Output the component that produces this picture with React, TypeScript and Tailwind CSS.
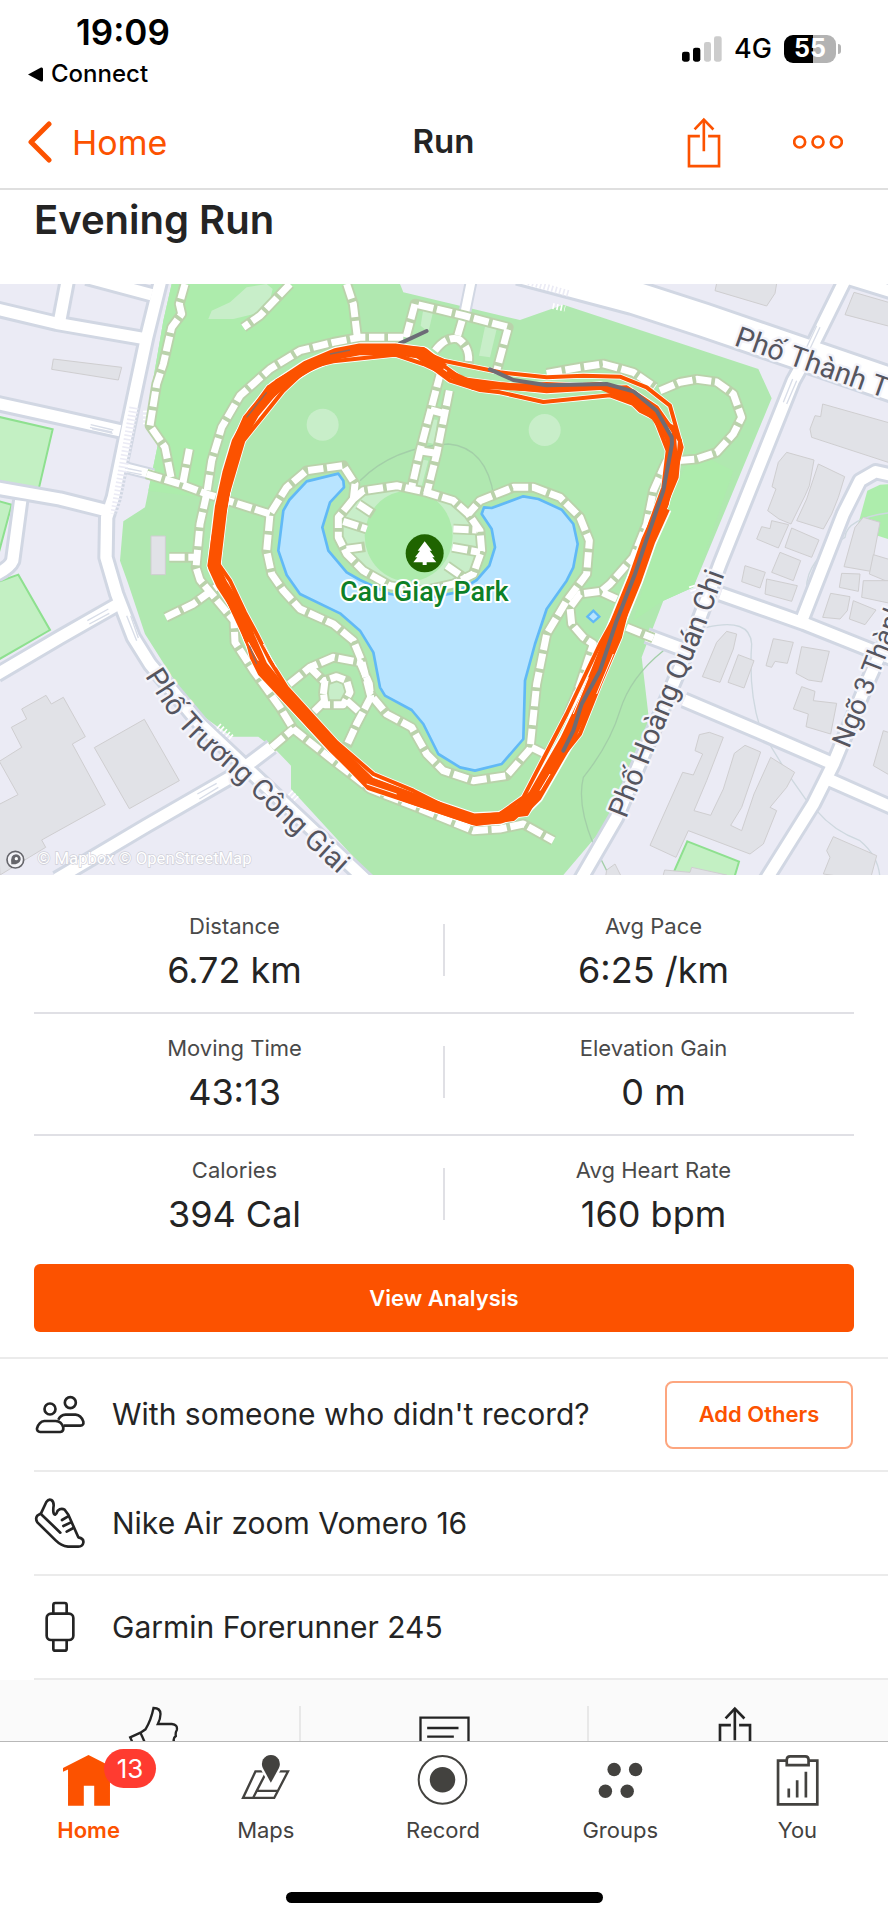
import React from 'react'
import clsx from 'clsx'

const INTER = "font-['Inter',sans-serif]"

const stats = [
  [
    { label: 'Distance', value: '6.72 km' },
    { label: 'Avg Pace', value: '6:25 /km' }
  ],
  [
    { label: 'Moving Time', value: '43:13' },
    { label: 'Elevation Gain', value: '0 m' }
  ],
  [
    { label: 'Calories', value: '394 Cal' },
    { label: 'Avg Heart Rate', value: '160 bpm' }
  ]
]

// Footpaths of the park, drawn as a casing with white dashes on top
const footpaths = [
  'M555 0L538 60L545 90L515 130L490 240L470 300L450 425L495 490L515 590',
  'M568 495L548 600',
  'M440 570L540 600L620 630L700 655L810 690',
  'M1210 160L1080 160L1000 175L900 200L810 255L720 335L665 430L635 530L620 630L600 720L588 850L600 888L660 960L702 1010L705 1075L760 1160L840 1270L880 1335L1000 1430L1110 1515L1250 1570L1420 1640L1500 1635L1570 1620L1660 1670',
  'M870 0L780 95L730 130',
  'M1040 0L1060 60L1072 160',
  'M1218 160L1245 60L1392 95L1525 130L1490 260',
  'M1386 110L1370 165',
  'M1305 200Q1340 155 1375 165Q1412 190 1405 240',
  'M1322 265L1260 500L1235 610',
  'M1348 320L1310 510L1280 630',
  'M1292 378L1330 388',
  'M1258 500L1310 508',
  'M1060 645L1065 600L1030 545L920 560L860 610L810 690L800 800L815 870L850 920L900 975L1000 1020L1060 1070L1085 1130L1110 1230L1160 1290L1235 1330L1280 1410L1330 1460L1420 1490L1520 1475L1590 1395L1610 1200L1640 1050L1700 950L1760 870L1768 770L1740 700L1680 640L1600 610L1540 610L1440 650L1405 690',
  'M1060 645L1015 700L1015 760L1040 810L1090 860L1170 905L1270 920L1360 900L1420 870L1445 800L1440 740L1405 690L1360 650L1280 625L1190 605L1090 620L1060 645',
  'M1075 660L1120 690',
  'M1030 712L1100 735',
  'M1040 796L1095 788',
  'M1360 735L1430 738',
  'M1357 790L1440 805',
  'M1340 845L1390 880',
  'M1980 320L2040 295L2090 286L2150 294L2200 330L2225 400L2200 450L2150 505L2090 525L2030 530',
  'M1640 268L1740 250L1810 240L1900 265L1965 310',
  'M2000 530L1960 620L1940 720L1900 820L1830 900L1800 925',
  'M1850 945L1800 922L1740 930L1710 970L1715 1020L1750 1060L1780 1080L1760 1140L1730 1230L1700 1300',
  'M1595 1390L1645 1415',
  'M1880 1030L1960 1062',
  'M497 1000L580 960L655 905',
  'M508 820L590 820',
  'M868 1200L930 1150L1000 1120L1080 1135L1108 1200L1112 1240L1070 1320L1040 1385',
  'M925 1145L970 1190',
  'M970 1230L975 1190L1010 1178L1040 1190L1050 1225L1030 1262L975 1262L970 1225',
  'M975 1250L935 1290',
  'M1040 1250L1080 1285',
  'M815 1390L880 1335'
]

const roads = [
  'M482 -10L440 160L385 420L340 640L320 700L318 820L350 930L400 1060L450 1140L600 1320L1110 1800',
  'M-10 75L170 118L440 165',
  'M202 -10L178 115',
  'M260 -20L455 32',
  'M-10 358L180 400L360 440',
  'M-10 612L180 645L320 680',
  'M62 650L38 830Q30 850 -10 870',
  'M-10 1172L180 1060L350 963',
  'M170 1785L440 1625L700 1475L815 1388',
  'M2535 -12L2430 200L2380 290L2160 840L2062 1100L1850 1600L1740 1790',
  'M2535 -20L2680 25',
  'M2680 575L2627 563L2580 590L2530 690L2405 1010',
  'M2162 930L2412 1018L2680 1125',
  'M2052 1248L2280 1345L2500 1440',
  'M2740 890L2600 1200L2500 1440L2440 1560L2290 1800',
  'M2490 1488L2680 1572',
  'M1940 1055L2060 1100'
]

const buildings = [
  'M160 225L365 250L355 288L155 256Z',
  'M453 756L496 756L496 872L453 872Z',
  'M65 1275L138 1234L154 1260L190 1240L256 1358L217 1380L316 1562L125 1668L137 1690L0 1773L-10 1565L54 1532L-2 1432L65 1390L34 1330L80 1305Z',
  'M283 1391L433 1306L538 1490L388 1574Z',
  'M2150 -2L2330 -2L2325 28L2300 66L2145 20Z',
  'M2562 25L2700 65L2680 130L2535 92Z',
  'M2468 360L2680 420L2680 540L2435 460L2430 435L2445 395L2462 398Z',
  'M2360 505L2442 528L2428 605L2415 635L2373 720L2337 705L2303 680L2328 615L2316 608L2335 535Z',
  'M2455 540L2534 578L2515 640L2495 690L2470 735L2390 710L2420 645Z',
  'M2315 710L2366 722L2335 792L2270 765L2285 728L2310 734Z',
  'M2375 732L2457 768L2435 820L2355 790Z',
  'M2340 805L2402 830L2380 890L2315 865Z',
  'M2235 845L2296 865L2280 912L2225 893Z',
  'M2590 700L2640 715L2612 862L2532 848L2565 730Z',
  'M2620 812L2680 830L2680 900L2608 870Z',
  'M2300 885L2392 905L2375 952L2295 930Z',
  'M2180 1042L2210 1050L2200 1095L2160 1195L2107 1178L2150 1075Z',
  'M2215 1112L2262 1130L2232 1212L2184 1195Z',
  'M2320 1064L2380 1075L2362 1138L2325 1132L2315 1150L2298 1145Z',
  'M2405 1088L2488 1102L2465 1194L2425 1188L2388 1168Z',
  'M2492 928L2550 938L2542 980L2520 1005L2468 1000Z',
  'M2560 950L2628 978L2595 1022L2548 1005Z',
  'M2525 868L2580 870L2575 922L2518 910Z',
  'M2590 890L2680 890L2680 960L2585 940Z',
  'M2405 1208L2445 1222L2440 1250L2510 1258L2492 1350L2418 1328L2425 1290L2380 1275Z',
  'M2128 1345L2170 1360L2120 1490L2082 1580L2132 1594L2170 1515L2203 1408L2235 1384L2282 1404L2225 1570L2192 1624L2225 1640L2262 1530L2312 1420L2384 1465L2360 1510L2310 1570L2330 1580L2290 1680L2250 1710L2065 1640L2028 1720L1950 1684L2048 1465L2080 1473L2108 1410L2085 1400L2098 1352Z',
  'M1994 1758L2070 1765L2075 1750L2180 1773L1985 1790Z',
  'M1845 1740L1870 1790L1815 1790L1820 1758Z',
  'M2500 1658L2630 1715L2610 1790L2470 1770L2490 1720L2480 1700Z',
  'M2650 1340L2680 1350L2680 1480L2620 1445Z'
]

const laps = [
  'M1185 190L1080 188L1010 200L920 240L830 292L735 400L700 480L668 620L640 760L628 845L660 905L715 990L752 1060L770 1110L850 1225L1000 1385L1110 1485L1230 1530L1410 1600L1500 1590L1570 1540L1700 1290L1800 1080L1850 990L1910 850L1950 720L1990 610L2003 500L1960 390L1900 330L1800 300L1640 315L1500 300L1385 285L1330 245L1270 195L1185 190',
  'M1185 212L1000 232L925 250L850 320L790 395L730 470L680 640L660 760L655 840L690 890L735 985L770 1050L810 1130L860 1210L1010 1375L1120 1470L1240 1520L1420 1610L1520 1600L1590 1570L1720 1350L1800 1180L1860 990L1930 850L1980 700L2030 580L2040 470L1970 370L1880 310L1800 312L1640 322L1480 305L1380 290L1270 240Z',
  'M1190 200L1060 195L940 235L805 310L740 400L690 540L665 660L645 780L635 850L690 960L740 1060L755 1120L780 1170L930 1330L1105 1512L1340 1590L1430 1620L1540 1605L1600 1550L1660 1450L1740 1350L1800 1200L1860 1060L1900 900L1960 760L2000 660L2045 490L2010 365L1940 310L1860 278L1750 275L1640 280L1500 265L1330 230L1260 200Z',
  'M1180 205L1070 205L985 225L870 290L790 360L720 470L690 590L670 700L650 830L640 870L700 960L740 1070L800 1160L940 1310L1110 1490L1250 1545L1420 1612L1560 1590L1670 1430L1760 1260L1830 1090L1870 960L1900 880L1940 760L2030 560L2020 430L1920 380L1900 360L1830 334L1630 354L1500 325L1440 318L1350 290L1250 215Z',
  'M1180 195L1100 192L1000 210L900 262L810 330L750 420L700 530L675 680L655 850L685 950L745 1080L830 1210L990 1370L1120 1500L1400 1600L1500 1600L1580 1590L1700 1380L1780 1210L1860 1010L1920 850L2000 660L2015 520L1990 420L1930 350L1830 308L1640 300L1420 312L1340 270L1240 198Z'
]

// Where the laps run close together they merge into one broad band
const westBand =
  'M1330 255L1270 208L1185 196L1080 196L1010 209L920 247L825 310L760 388L712 475L685 565L662 670L650 770L642 850L665 900L720 985L748 1060L785 1145L850 1225L1000 1390L1110 1497L1250 1548L1420 1606L1500 1602L1580 1568'
const eastBand = 'M1560 1580L1605 1535L1700 1370L1760 1245L1795 1160L1850 1020L1905 885L1945 770L1990 670'

function RouteMap() {
  const label = { fontFamily: 'Roboto', fontWeight: 400, fill: '#55555f' }
  return (
    <svg
      viewBox="0 0 2664 1773"
      className="block w-full"
      role="img"
      aria-label="Route around Cau Giay Park"
    >
      <defs>
        <path id="truong" d="M434 1176L498 1276Q560 1360 640 1425Q740 1510 860 1628L1045 1798" />
        <path id="hoang" d="M1878 1606L1957 1412L2062 1160L2107 1053L2200 800" />
        <path id="ngo" d="M2547 1396L2587 1298L2632 1185L2740 910" />
        <path id="thanh" d="M2200 183L2760 380" />
      </defs>
      <rect width="2664" height="1773" fill="#ebebf5" />

      <g fill="#c3f0c3" stroke="#8ee08f" strokeWidth="6">
        <path d="M-10 397L158 436L115 620L-10 590Z" />
        <path d="M-10 650L35 662L-10 830Z" />
        <path d="M-10 895L55 872L150 1038L-10 1130Z" />
        <path d="M2062 1672L2217 1733L2200 1790L2010 1790Z" />
      </g>
      <path d="M2680 600L2640 602L2602 620L2572 730L2600 745L2680 770Z" fill="#adedac" />

      <path
        d="M515 0L490 110L440 400L435 425L475 475L435 670L370 712L360 830L385 900L435 1050L530 1200L600 1290L695 1358L775 1358L830 1400L873 1445L873 1515L1110 1773L1690 1773L1820 1620L1930 1440L1945 1290L1925 1120L1990 950L2080 910L2315 343L2275 255L1690 62L1560 108L1210 25L1200 0Z"
        fill="#b0e8b0"
      />
      <path
        d="M515 0L490 110L440 400L475 475L445 620L600 640L665 430L800 260L1000 170L1080 160L1050 0Z"
        fill="#adecac"
      />
      <path d="M2080 500L2200 560L2080 910L1990 950L1900 1010L2000 660Z" fill="#adecac" />
      <g fill="#c8eec9">
        <path d="M625 105L635 80L690 55L740 10L800 0L818 15L812 40L770 88L700 105Z" />
        <circle cx="968" cy="422" r="48" />
        <circle cx="1634" cy="438" r="48" />
        <path d="M1270 75L1300 80L1285 145L1262 125Z" />
        <path d="M1455 128L1490 135L1470 220L1437 215Z" />
        <path d="M1292 405L1312 408L1302 480L1280 475Z" />
        <path d="M1260 525L1285 530L1265 605L1245 600Z" />
        <path d="M1060 650L1120 615L1220 620L1360 650L1450 730L1445 820L1400 880L1270 920L1150 895L1050 820L1010 740Z" />
        <circle cx="1006" cy="1222" r="32" stroke="#b9cfa8" strokeWidth="5" />
      </g>
      <ellipse cx="1226" cy="756" rx="132" ry="136" fill="#adebac" />

      <path
        d="M1015 569L920 592L868 648L850 680L835 800L860 873L900 930L1020 988L1080 1040L1120 1105L1140 1210L1155 1235L1235 1278L1270 1320L1315 1410L1380 1450L1425 1460L1505 1440L1570 1365L1575 1190L1605 1080L1640 975L1700 890L1720 850L1733 780L1720 720L1685 677L1615 645L1570 637L1475 672L1452 670L1445 690L1475 735L1485 790L1468 845L1430 888L1370 925L1270 945L1170 930L1080 888L1040 865L985 800L967 730L990 655L1032 610L1030 590Z"
        fill="#b8e4ff"
        stroke="#61b9f6"
        strokeWidth="8"
        strokeLinejoin="round"
      />
      <path d="M1780 980L1798 998L1780 1014L1762 998Z" fill="#b8e4ff" stroke="#61b9f6" strokeWidth="7" />

      <g fill="none" stroke="#a3cfa8" strokeWidth="4">
        <path d="M1080 590Q1180 490 1345 480Q1460 490 1482 640" />
        <path d="M1990 1100Q1890 1180 1860 1280Q1830 1380 1750 1480Q1730 1560 1780 1680L1820 1760" />
        <path d="M2120 1030Q2250 1000 2255 1080Q2245 1220 2280 1330Q2340 1440 2420 1550" stroke="#ced8df" />
        <path d="M2450 1580Q2500 1640 2580 1670Q2640 1720 2640 1790" stroke="#ced8df" />
        <path d="M2680 685Q2540 700 2535 760Q2410 830 2420 930" stroke="#ced8df" />
      </g>

      <g fill="#e1e2e7" stroke="#cfced0" strokeWidth="3">
        {buildings.map((d) => (
          <path key={d} d={d} />
        ))}
      </g>

      <g fill="none" strokeLinejoin="round">
        {roads.map((d) => (
          <path key={d} d={d} stroke="#d1d7e3" strokeWidth="52" />
        ))}
        <path d="M1560 -50L1900 40L2110 108L2700 310" stroke="#d1d7e3" strokeWidth="112" />
        <path d="M365 548L460 572M1414 -10L1394 88" stroke="#d1d7e3" strokeWidth="38" />
        {roads.map((d) => (
          <path key={d} d={d} stroke="#fff" strokeWidth="34" />
        ))}
        <path d="M1560 -50L1900 40L2110 108L2700 310" stroke="#fff" strokeWidth="94" />
        <path d="M365 548L460 572M1414 -10L1394 88" stroke="#fff" strokeWidth="26" />
        <g stroke="#d8dde8" strokeWidth="4">
          <path d="M272 422L340 438M276 434L338 448M270 430L336 444" />
          <path d="M375 552L425 562M375 562L425 572" />
          <path d="M380 995L410 1070M392 995L415 1062" />
          <path d="M262 1010L325 975M268 1020L328 988" />
          <path d="M592 1530L650 1498M598 1545L655 1510" />
          <path d="M2450 125L2415 200M2460 130L2425 205" />
          <path d="M2378 285L2350 355M2390 290L2360 360" />
        </g>
        <path d="M402 370L345 690" stroke="#ebebf5" strokeWidth="28" strokeDasharray="5 7" />
        <path d="M1585 -6L1710 30" stroke="#ebebf5" strokeWidth="20" strokeDasharray="5 7" />
        <path
          d="M438 380L438 425M1658 66L1695 74M655 1325L700 1365M870 1525L890 1545M2075 905L2085 935"
          stroke="#fff"
          strokeWidth="18"
          strokeDasharray="5 7"
        />
      </g>

      <g fill="none" strokeLinejoin="round">
        {footpaths.map((d) => (
          <path key={d} d={d} stroke="#bad2ab" strokeWidth="32" />
        ))}
        {footpaths.map((d) => (
          <path key={d} d={d} stroke="#fff" strokeWidth="21" strokeDasharray="46 11" />
        ))}
      </g>

      <path d="M1200 178L1280 141" stroke="#6c6c76" strokeWidth="12" strokeLinecap="round" />
      <g fill="none" strokeLinejoin="round">
        <path d={westBand} stroke="#fff" strokeWidth="42" />
        <path d={eastBand} stroke="#fff" strokeWidth="52" />
        {laps.map((d) => (
          <path key={d} d={d} stroke="#fff" strokeWidth="17" />
        ))}
        {laps.map((d) => (
          <path key={d} d={d} stroke="#fc5200" strokeWidth="12" />
        ))}
        <path d={westBand} stroke="#fc5200" strokeWidth="35" />
        <path d={eastBand} stroke="#fc5200" strokeWidth="42" />
        <path d="M1340 265L1420 302L1640 314L1800 305L1895 345L1965 400L2012 470L2016 560L1990 670" stroke="#fc5200" strokeWidth="22" />
        <path
          d="M745 1075L775 1130M790 1080L830 1150M1765 1180L1720 1290M1840 1110L1790 1230M1650 1470L1620 1520M1100 1500L1190 1530"
          stroke="#fff"
          strokeWidth="3"
        />
        <path
          d="M1690 1400L1720 1340L1745 1260L1800 1160L1850 1010L1905 870L1935 780L1990 620L2016 480L2015 460L1970 380L1900 322L1820 300L1640 304L1540 288L1470 256"
          stroke="#6f6c74"
          strokeWidth="12"
          strokeLinecap="round"
        />
        <path d="M740 400L800 325M990 210L1050 198M748 1085L770 1140" stroke="#8a6a60" strokeWidth="4" />
      </g>

      <g {...label} stroke="#f4f4fa" strokeWidth="14" strokeLinejoin="round" paintOrder="stroke">
        <text fontSize="86">
          <textPath href="#truong">Phố Trương Công Giai</textPath>
        </text>
        <text fontSize="86">
          <textPath href="#hoang">Phố Hoàng Quán Chi</textPath>
        </text>
        <text fontSize="82">
          <textPath href="#ngo">Ngõ 3 Thành</textPath>
        </text>
        <text fontSize="86">
          <textPath href="#thanh">Phố Thành T</textPath>
        </text>
      </g>

      <circle cx="1274" cy="808" r="57" fill="#1f6400" />
      <path
        d="M1274 772L1296 800L1289 800L1304 820L1297 820L1309 835L1280 835L1280 843L1268 843L1268 835L1240 835L1252 820L1245 820L1260 800L1253 800Z"
        fill="#fff"
      />
      <text
        x="1273"
        y="952"
        textAnchor="middle"
        fontFamily="Roboto"
        fontWeight="500"
        fontSize="81"
        fill="#0d8026"
        stroke="#fff"
        strokeWidth="12"
        strokeLinejoin="round"
        paintOrder="stroke"
      >
        Cau Giay Park
      </text>

      <circle cx="46" cy="1727" r="25" fill="#f4f4f8" stroke="#66666c" strokeWidth="5" />
      <path d="M34 1741Q30 1711 48 1711Q63 1713 62 1727Q58 1742 34 1741Z" fill="#66666c" />
      <circle cx="49" cy="1724" r="5" fill="#fff" />
      <text
        x="112"
        y="1739"
        fontFamily="Roboto"
        fontSize="50"
        fill="#fff"
        stroke="#cfcfd8"
        strokeWidth="4"
        paintOrder="stroke"
      >
        © Mapbox © OpenStreetMap
      </text>
    </svg>
  )
}

function ShareIcon() {
  return (
    <svg
      viewBox="727 347 103 153"
      className="h-[51px] w-[34px] shrink-0"
      fill="none"
      stroke="currentColor"
      strokeWidth="8"
    >
      <path d="M766 404H733V495H824V404H791" />
      <path d="M778 450V354" />
      <path d="M750 384L778 354L807 384" />
    </svg>
  )
}

function StatusBar() {
  return (
    <div className="flex h-24 items-start justify-between pr-[47px] pl-7 text-black">
      <div className="flex flex-col">
        <span className="mt-3 ml-12 text-[35px] leading-10 font-semibold">19:09</span>
        <button className="mt-2 flex items-center gap-2 text-[24px] leading-7 font-medium">
          <svg viewBox="0 0 15 15" className="size-[15px]">
            <path d="M0 7.500L13 0.500Q15 0 15 2V13Q15 15 13 14.500Z" fill="currentColor" />
          </svg>
          Connect
        </button>
      </div>
      <div className="mt-[35px] flex items-center">
        <svg viewBox="717 106 120 78" className="h-[26px] w-10">
          <rect x="717" y="153" width="23" height="30" rx="7" />
          <rect x="750" y="141" width="22" height="42" rx="7" />
          <rect x="783" y="124" width="21" height="59" rx="7" fill="#ccc" />
          <rect x="813" y="107" width="23" height="76" rx="7" fill="#ccc" />
        </svg>
        <span className="ml-3 text-[27px] leading-7 font-medium">4G</span>
        <div className="ml-3 flex h-7 w-[52px] items-center justify-center rounded-[9px] bg-linear-to-r from-black from-56% to-[#b3b3b3] to-56% text-[25px] font-bold text-white">
          55
        </div>
        <span className="ml-0.5 h-2.5 w-[3px] rounded-r-full bg-[#b3b3b3]" />
      </div>
    </div>
  )
}

function NavBar() {
  return (
    <header className="grid h-[94px] grid-cols-3 items-center border-b-2 border-[#dfdfdf] pr-[45px] pl-7">
      <button className="flex items-center gap-5 text-[34px] text-[#fc5200]">
        <svg viewBox="0 0 24 42" className="h-[42px] w-6" fill="none" stroke="currentColor">
          <path d="M21 3L3 21L21 39" strokeWidth="5" strokeLinecap="round" strokeLinejoin="round" />
        </svg>
        Home
      </button>
      <h1 className="pl-4 text-center text-[33px] font-semibold">Run</h1>
      <div className="flex items-center justify-end gap-[72px] text-[#fc5200]">
        <button aria-label="Share">
          <ShareIcon />
        </button>
        <button aria-label="More">
          <svg viewBox="0 0 150 42" className="h-3.5 w-[50px]" fill="none" stroke="currentColor" strokeWidth="8">
            <circle cx="20" cy="21" r="16.500" />
            <circle cx="75" cy="21" r="16.500" />
            <circle cx="130" cy="21" r="16.500" />
          </svg>
        </button>
      </div>
    </header>
  )
}

function Stat({ label, value }: { label: string; value: string }) {
  return (
    <div className="flex flex-1 flex-col items-center gap-2.5">
      <dt className="text-[22px] leading-7 text-[#494949]">{label}</dt>
      <dd className="text-[36px] leading-10 text-[#242424]">{value}</dd>
    </div>
  )
}

function PeopleIcon() {
  return (
    <svg viewBox="103 148 156 156" className="size-[52px]" fill="none" stroke="currentColor" strokeWidth="8">
      <circle cx="151" cy="208" r="16.500" />
      <circle cx="212" cy="189" r="16.500" />
      <path d="M122 277H182Q192 276 191 264Q186 245 168 244H134Q118 246 112 266Q111 276 122 277Z" />
      <path d="M176 240Q182 226 198 225H228Q244 226 251 246Q253 257 242 258H192" />
    </svg>
  )
}

function ShoeIcon() {
  return (
    <svg
      viewBox="103 473 156 156"
      className="size-[52px]"
      fill="none"
      stroke="currentColor"
      strokeWidth="8"
      strokeLinejoin="round"
      strokeLinecap="round"
    >
      <path d="M124 522L140 488Q147 478 155 482Q162 486 162 498Q158 525 167 526Q171 524 174 514Q184 505 195 511L206 526L236 594Q253 597 251 610Q249 622 236 622H205Q184 619 168 603L113 549Q106 538 113 529Z" />
      <path d="M126 526L182 580" />
      <path d="M187 542L204 532M191 560L214 549M201 577L221 566" />
    </svg>
  )
}

function WatchIcon() {
  return (
    <svg viewBox="103 786 156 156" className="size-[52px]" fill="none" stroke="currentColor" strokeWidth="8">
      <rect x="141" y="824" width="80" height="79" rx="13" />
      <path d="M161 824V798Q161 792 167 792H195Q201 792 201 798V824" />
      <path d="M161 903V929Q161 935 167 935H195Q201 935 201 929V903" />
    </svg>
  )
}

interface DetailRowProps extends React.HTMLAttributes<HTMLDivElement> {
  icon: React.ReactNode
  title: string
}

function DetailRow({ icon, title, className, children }: DetailRowProps) {
  return (
    <div
      className={clsx(
        'ml-[34px] flex items-center border-b-2 border-[#ebebeb] pr-[35px] text-[#242424]',
        className
      )}
    >
      {icon}
      <span className="ml-[26px] flex-1 text-[30px]">{title}</span>
      {children}
    </div>
  )
}

function ActionRow() {
  return (
    <div className="flex items-start bg-[#fafafa] pt-[26px] pb-8 text-[#242424]">
      <button aria-label="Give kudos" className="flex flex-1 justify-center pl-2">
        <svg viewBox="387 108 152 153" className="size-[51px]" fill="none" stroke="currentColor" strokeWidth="7">
          <path d="M415 250L393 202L424 188L439 178Q456 150 463 114Q484 114 484 132Q484 146 476 162H518Q536 164 533 180Q528 188 530 198Q522 204 524 212Q516 222 517 232Q510 248 490 248H450" />
          <path d="M424 188L446 238" />
        </svg>
      </button>
      <div className="flex h-[60px] w-[290px] justify-center border-x-2 border-[#e8e8e8]">
        <button aria-label="Comment">
          <svg viewBox="0 0 152 153" className="size-[51px]" fill="none" stroke="currentColor" strokeWidth="7">
            <path d="M4 20H148V120H70L40 146V120H4Z" />
            <path d="M24 51H118M24 77H104" />
          </svg>
        </button>
      </div>
      <button aria-label="Share activity" className="flex flex-1 justify-center pr-2">
        <ShareIcon />
      </button>
    </div>
  )
}

const tabs = [
  {
    name: 'Home',
    active: true,
    badge: 13,
    icon: (
      <svg viewBox="189 254 152 152" className="size-[51px]" fill="currentColor">
        <path d="M265 254L341 293V304L329 297V405H282V346H251V405H204V297L189 304V293Z" />
      </svg>
    )
  },
  {
    name: 'Maps',
    icon: (
      <svg viewBox="724 254 152 152" className="size-[51px]" fill="none" stroke="currentColor" strokeWidth="7">
        <path d="M770 303L733 382H826L867 303Z" />
        <path d="M799 312L764 380M775 361H835" />
        <path
          d="M816 337L792 293Q786 279 793 267Q802 254 816 254Q831 254 839 267Q846 279 840 293Z"
          fill="currentColor"
          stroke="#fff"
          strokeWidth="14"
          paintOrder="stroke"
        />
      </svg>
    )
  },
  {
    name: 'Record',
    icon: (
      <svg viewBox="0 0 152 152" className="size-[51px]" fill="none" stroke="currentColor" strokeWidth="6">
        <circle cx="76" cy="74" r="71" />
        <circle cx="76" cy="74" r="38" fill="currentColor" stroke="none" />
      </svg>
    )
  },
  {
    name: 'Groups',
    icon: (
      <svg viewBox="451 254 152 152" className="size-[51px]" fill="currentColor">
        <circle cx="508" cy="297" r="20" />
        <circle cx="572" cy="297" r="20" />
        <circle cx="482" cy="362" r="20" />
        <circle cx="547" cy="362" r="20" />
      </svg>
    )
  },
  {
    name: 'You',
    icon: (
      <svg viewBox="983 254 152 152" className="size-[51px]" fill="none" stroke="currentColor" strokeWidth="8">
        <path d="M1026 271H1001V401H1118V271H1093" />
        <path d="M1027 284V268Q1027 258 1037 258H1082Q1092 258 1092 268V284Z" />
        <path d="M1033 381V354M1058 381V329M1084 381V304" />
      </svg>
    )
  }
]

function TabBar() {
  return (
    <nav className="shrink-0 border-t border-[#b8b8b8] bg-white">
      <div className="grid grid-cols-5 pt-[13px] pr-0.5">
        {tabs.map((tab) => (
          <a
            key={tab.name}
            href="#"
            className={clsx(
              'flex flex-col items-center gap-2 text-[22px] leading-8',
              tab.active ? 'font-semibold text-[#fc5200]' : 'text-[#43423f]'
            )}
          >
            <span className="relative">
              {tab.icon}
              {tab.badge && (
                <span className="absolute -top-1.5 left-[41px] flex h-[39px] w-[52px] items-center justify-center rounded-full bg-[#ff3b30] text-[26px] font-normal text-white">
                  {tab.badge}
                </span>
              )}
            </span>
            {tab.name}
          </a>
        ))}
      </div>
      <div className="mx-auto mt-[46px] mb-[17px] h-[11px] w-[317px] rounded-full bg-black" />
    </nav>
  )
}

export default function App() {
  return (
    <div className={clsx('flex h-screen flex-col bg-white text-[#242424]', INTER)}>
      <StatusBar />
      <NavBar />
      <main className="min-h-0 flex-1 overflow-y-auto [scrollbar-width:none]">
        <h2 className="px-[34px] pt-1 pb-[38px] text-[40px] leading-[52px] font-semibold">Evening Run</h2>
        <RouteMap />
        <dl className="px-[34px] pt-[17px]">
          {stats.map((row, i) => (
            <div
              key={row[0].label}
              className={clsx('flex items-end pt-5 pb-[22px]', i < stats.length - 1 && 'border-b-2 border-[#e0e0e5]')}
            >
              <Stat {...row[0]} />
              <span className="mx-2 mb-3.5 h-[52px] w-0.5 bg-[#e0e0e5]" />
              <Stat {...row[1]} />
            </div>
          ))}
        </dl>
        <div className="px-[34px] pt-2 pb-[25px]">
          <button className="h-[68px] w-full rounded-md bg-[#fc5200] text-[22px] font-semibold text-white">
            View Analysis
          </button>
        </div>
        <section className="border-t-2 border-[#ebebeb]">
          <DetailRow icon={<PeopleIcon />} title="With someone who didn't record?" className="h-[113px]">
            <button className="h-[68px] w-[188px] rounded-lg border-2 border-[#fda67f] text-[22px] font-semibold text-[#fc5200]">
              Add Others
            </button>
          </DetailRow>
          <DetailRow icon={<ShoeIcon />} title="Nike Air zoom Vomero 16" className="h-[104px]" />
          <DetailRow icon={<WatchIcon />} title="Garmin Forerunner 245" className="h-[104px]" />
        </section>
        <ActionRow />
      </main>
      <TabBar />
    </div>
  )
}
